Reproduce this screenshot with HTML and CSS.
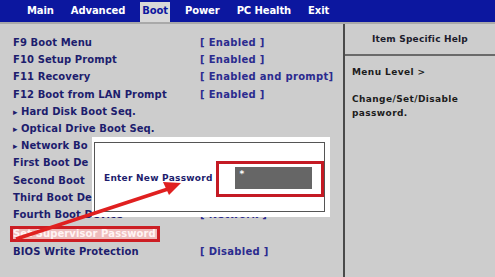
FILE: index.html
```html
<!DOCTYPE html>
<html>
<head>
<meta charset="utf-8">
<link rel="stylesheet" href="styles.css">
</head>
<body>
<div class="screen">
  <div class="menubar">
    <span class="tab">Main</span>
    <span class="tab">Advanced</span>
    <span class="tab active">Boot</span>
    <span class="tab">Power</span>
    <span class="tab">PC Health</span>
    <span class="tab">Exit</span>
  </div>
  <div class="body">
    <div class="left">
      <div class="row"><span class="label">F9 Boot Menu</span><span class="value">[ Enabled ]</span></div>
      <div class="row"><span class="label">F10 Setup Prompt</span><span class="value">[ Enabled ]</span></div>
      <div class="row"><span class="label">F11 Recovery</span><span class="value">[ Enabled and prompt]</span></div>
      <div class="row"><span class="label">F12 Boot from LAN Prompt</span><span class="value">[ Enabled ]</span></div>
      <div class="row"><span class="label"><span class="tri">&#9656;</span>Hard Disk Boot Seq.</span></div>
      <div class="row"><span class="label"><span class="tri">&#9656;</span>Optical Drive Boot Seq.</span></div>
      <div class="row"><span class="label clip"><span class="tri">&#9656;</span>Network Bo</span></div>
      <div class="row"><span class="label clip">First Boot De</span></div>
      <div class="row"><span class="label clip">Second Boot</span></div>
      <div class="row"><span class="label clip">Third Boot De</span></div>
      <div class="row"><span class="label">Fourth Boot Device</span><span class="value">[ Network ]</span></div>
      <div class="row sel-row"><span class="label selected">Set Supervisor Password</span></div>
      <div class="row"><span class="label">BIOS Write Protection</span><span class="value">[ Disabled ]</span></div>
    </div>
    <div class="right">
      <div class="help-head">Item Specific Help</div>
      <div class="help-body">
        <p>Menu Level &gt;</p>
        <p>Change/Set/Disable<br>password.</p>
      </div>
    </div>
  </div>

  <div class="popup">
    <div class="popup-inner">
      <span class="prompt">Enter New Password</span>
      <div class="field-frame"><div class="field">*</div></div>
    </div>
  </div>

  <svg class="arrow" width="495" height="277" viewBox="0 0 495 277">
    <line x1="16" y1="239" x2="168" y2="189" stroke="#e02020" stroke-width="3.5"/>
    <polygon points="181,183 163,182 169,195" fill="#e02020"/>
  </svg>
</div>
</body>
</html>
```
FILE: styles.css
```css
html, body {
  margin: 0;
  padding: 0;
}
body {
  width: 495px;
  height: 277px;
  overflow: hidden;
  background: #cdcdcd;
  font-family: "DejaVu Sans", Verdana, sans-serif;
  font-weight: bold;
}
.screen {
  position: relative;
  width: 495px;
  height: 277px;
}
.menubar {
  height: 22px;
  background: #0c179f;
  display: flex;
  align-items: center;
  padding-left: 25px;
  box-sizing: border-box;
}
.tab {
  color: #ffffff;
  font-size: 10px;
  padding: 4px 2px 5px;
  margin-right: 13px;
  line-height: 10px;
  letter-spacing: -0.1px;
}
.tab.active {
  background: #d8d8d8;
  color: #0c179f;
  margin-top: 2px;
  padding-bottom: 6px;
}
.body {
  display: flex;
  height: 255px;
  border-top: 2px solid #a9a9a9;
  background: #cdcdcd;
}
.left {
  width: 345px;
  padding: 10px 0 0 13px;
  box-sizing: border-box;
  border-right: 2px solid #4a4a4a;
  color: #1d1d6d;
  font-size: 10px;
}
.row {
  display: flex;
  height: 17.2px;
  line-height: 17.2px;
  white-space: nowrap;
}
.label {
  width: 187px;
  letter-spacing: 0.1px;
}
.value {
  color: #2b2b8f;
  letter-spacing: 0.3px;
}
.tri {
  display: inline-block;
  width: 8px;
  font-size: 9px;
}
.sel-row {
  margin-top: 2px;
  height: 18px;
  align-items: center;
  margin-left: -3px;
}
.selected {
  width: auto;
  border: 3px solid #cc1e24;
  background: #eebcbc;
  color: #fff4f4;
  line-height: 10px;
  padding: 0 1px 0 0;
}
.right {
  flex: 1;
  color: #1c1c1c;
  font-size: 9px;
}
.help-head {
  height: 30px;
  border-bottom: 2px solid #6a6a6a;
  text-align: center;
  line-height: 31px;
  font-size: 9px;
  color: #1c1c2c;
  letter-spacing: 0.2px;
}
.help-body {
  padding: 9px 0 0 7px;
  letter-spacing: 0.4px;
}
.help-body p {
  margin: 0 0 13px;
  line-height: 14px;
}
.popup {
  position: absolute;
  left: 92px;
  top: 137px;
  width: 238px;
  height: 80px;
  background: #ffffff;
  padding: 5px 5px 5px 2px;
  box-sizing: border-box;
}
.popup-inner {
  height: 70px;
  border: 1px solid #555555;
  display: flex;
  align-items: center;
  padding-left: 9px;
  box-sizing: border-box;
}
.prompt {
  color: #1d1d6d;
  font-size: 9px;
  width: 113px;
  margin-top: 1px;
  letter-spacing: 0.25px;
}
.field-frame {
  border: 3px solid #c41a24;
  padding: 3px 9px 3px 16px;
  width: 108px;
  height: 36px;
  box-sizing: border-box;
  margin-top: 4px;
}
.field {
  background: #666666;
  height: 22px;
  color: #ffffff;
  font-size: 9px;
  line-height: 14px;
  padding-left: 4px;
}
.arrow {
  position: absolute;
  left: 0;
  top: 0;
  pointer-events: none;
}
```
